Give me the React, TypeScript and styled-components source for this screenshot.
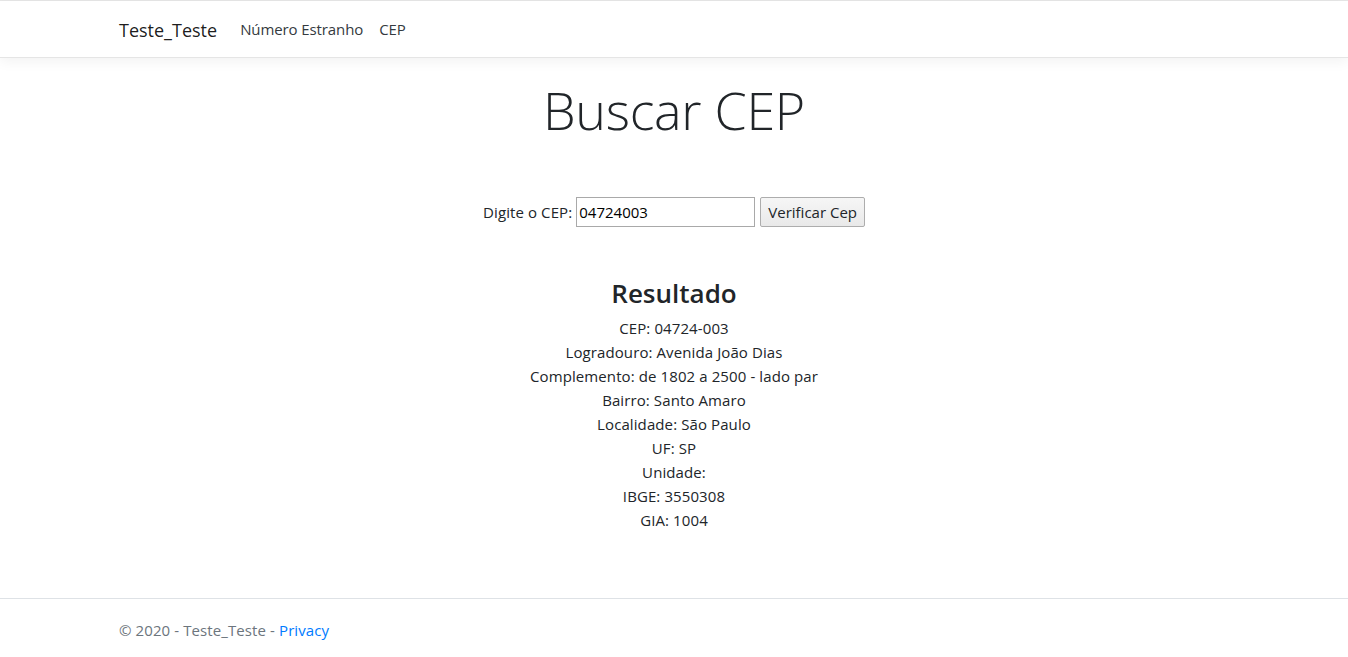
import React from "react";
import styled, { createGlobalStyle } from "styled-components";

const Global = createGlobalStyle`
  html, body { margin: 0; padding: 0; }
  body {
    font-family: "Open Sans", "Noto Sans", sans-serif;
    font-size: 15px;
    line-height: 24px;
    color: #212529;
    background: #fff;
  }
  * { box-sizing: border-box; }
`;

const Page = styled.div`
  min-height: 657px;
  display: flex;
  flex-direction: column;
  border-top: 1px solid #e6e6e6;
`;

const NavBar = styled.header`
  height: 57px;
  border-bottom: 1px solid #e5e5e5;
  box-shadow: 0 0.25rem 0.75rem rgba(0, 0, 0, 0.05);
  background: #fff;
`;

const Container = styled.div`
  width: 1140px;
  margin: 0 auto;
  padding: 0 15px;
  display: flex;
  align-items: center;
  height: 100%;
`;

const Brand = styled.a`
  font-size: 18px;
  color: rgba(0, 0, 0, 0.9);
  text-decoration: none;
  margin-right: 15px;
  padding-top: 1px;
`;

const NavLink = styled.a`
  font-size: 15px;
  color: #343a40;
  text-decoration: none;
  padding: 0 8px;
  letter-spacing: -0.1px;
`;

const Main = styled.main`
  display: flex;
  flex-direction: column;
  align-items: center;
  text-align: center;
  padding-top: 16px;
  flex: 1;
`;

const Title = styled.h1`
  font-size: 52px;
  font-weight: 300;
  line-height: 67px;
  margin: 2px 0 0;
  letter-spacing: -0.3px;
`;

const Form = styled.form`
  display: flex;
  align-items: center;
  margin-top: 54px;
  gap: 4px;
`;

const Label = styled.label`
  font-size: 15px;
  letter-spacing: 0.1px;
`;

const Input = styled.input`
  width: 179px;
  height: 30px;
  border: 1px solid #a9a9a9;
  font-family: inherit;
  font-size: 15px;
  padding: 0 2px;
  color: #000;
`;

const Button = styled.button`
  height: 30px;
  padding: 0 7px;
  border: 1px solid #adadad;
  border-radius: 2px;
  background: linear-gradient(#f6f6f6, #e9e9e9);
  font-family: inherit;
  font-size: 15px;
  color: #212529;
  margin-left: 1px;
`;

const ResultTitle = styled.h3`
  font-size: 26px;
  font-weight: 600;
  line-height: 34px;
  margin: 49px 0 6px;
`;

const Line = styled.div`
  line-height: 24px;
  letter-spacing: 0.1px;
`;

const Footer = styled.footer`
  height: 59px;
  border-top: 1px solid #dee2e6;
  color: #6c757d;
  font-size: 15px;
`;

const FooterInner = styled(Container)`
  padding-top: 3px;
  letter-spacing: 0.1px;
`;

const Link = styled.a`
  color: #007bff;
  text-decoration: none;
  margin-left: 4px;
`;

const rows = [
  "CEP: 04724-003",
  "Logradouro: Avenida João Dias",
  "Complemento: de 1802 a 2500 - lado par",
  "Bairro: Santo Amaro",
  "Localidade: São Paulo",
  "UF: SP",
  "Unidade:",
  "IBGE: 3550308",
  "GIA: 1004",
];

export default function App() {
  return (
    <>
      <Global />
      <Page>
        <NavBar>
          <Container>
            <Brand href="#">Teste_Teste</Brand>
            <NavLink href="#">Número Estranho</NavLink>
            <NavLink href="#">CEP</NavLink>
          </Container>
        </NavBar>
        <Main>
          <Title>Buscar CEP</Title>
          <Form onSubmit={(e) => e.preventDefault()}>
            <Label>Digite o CEP:</Label>
            <Input defaultValue="04724003" />
            <Button type="submit">Verificar Cep</Button>
          </Form>
          <ResultTitle>Resultado</ResultTitle>
          {rows.map((r) => (
            <Line key={r}>{r}</Line>
          ))}
        </Main>
        <Footer>
          <FooterInner>
            © 2020 - Teste_Teste -<Link href="#">Privacy</Link>
          </FooterInner>
        </Footer>
      </Page>
    </>
  );
}
